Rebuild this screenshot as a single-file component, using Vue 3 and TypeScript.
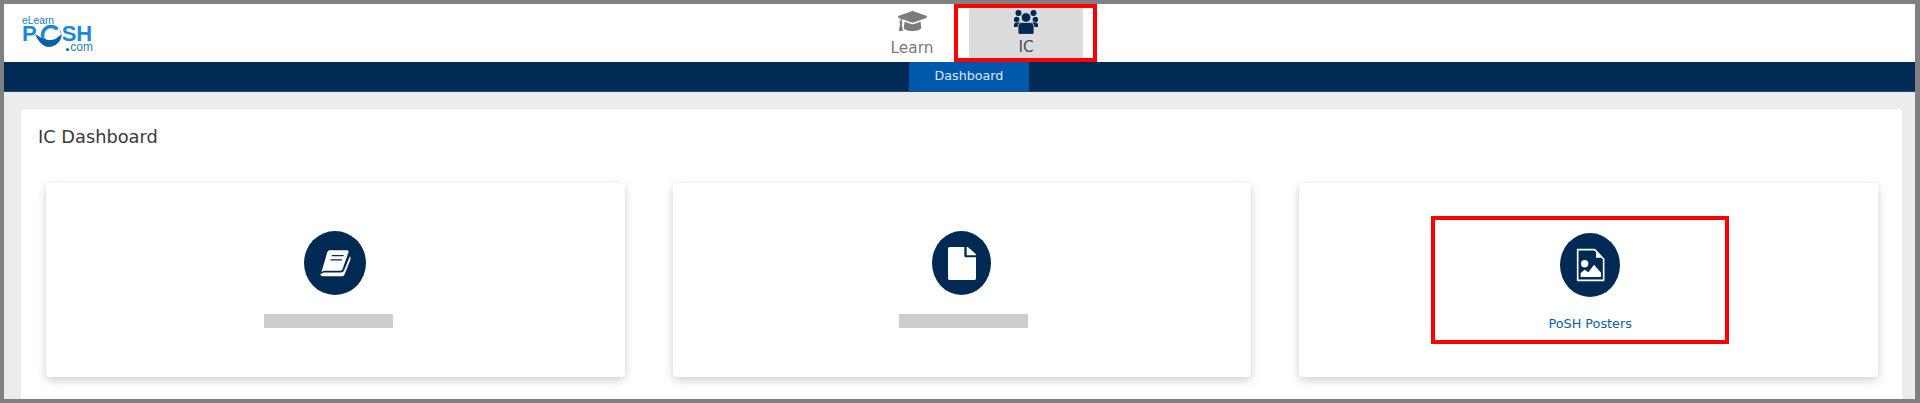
<script setup lang="ts">
interface Card {
  name: string
  label?: string
  circle: string
}

const cards: Card[] = [
  { name: 'book', circle: 'wide' },
  { name: 'file', circle: 'narrow' },
  { name: 'poster', label: 'PoSH Posters', circle: 'mid' }
]
</script>

<template>
  <div class="frame">
    <header class="top">
      <div class="logo">
        <span class="logo-small">eLearn</span>
        <div class="logo-word">
          <span>P</span>
          <svg class="logo-o" viewBox="0 0 30 22" aria-hidden="true">
            <circle cx="16" cy="10" r="8.5" fill="none" stroke="#1b8ad6" stroke-width="3.6" />
            <path d="M8 12C13 12 19 8 24 3L26 10C22 13 15 15 8 12Z" fill="#fff" />
            <path d="M0 9C5 12 9 15 14 15C19 15 24 13 27 9C26 17 20 22 14 22C8 22 3 16 0 9Z" fill="#0f5ea8" />
          </svg>
          <span>SH</span>
        </div>
        <span class="logo-com"><i></i>com</span>
      </div>
      <nav class="tabs">
        <div class="tab">
          <svg class="cap" viewBox="0 64 640 384" preserveAspectRatio="none" aria-hidden="true">
            <path fill="#7b7b7b" d="M622.34 153.2L343.4 67.5c-15.2-4.67-31.6-4.67-46.79 0L17.66 153.2c-23.54 7.23-23.54 38.36 0 45.59l48.63 14.94c-10.67 13.19-17.23 29.28-17.88 46.9C38.78 266.15 32 276.11 32 288c0 10.78 5.68 19.85 13.86 25.65L20.33 428.53C18.11 438.52 25.71 448 35.94 448h56.11c10.24 0 17.84-9.48 15.62-19.47L82.14 313.65C90.32 307.85 96 298.78 96 288c0-11.57-6.47-21.25-15.66-26.87.76-15.02 8.44-28.3 20.69-36.72L296.6 284.5c9.06 2.78 26.44 6.25 46.79 0l278.95-85.7c23.55-7.24 23.55-38.36 0-45.6zM352.79 315.09c-28.53 8.76-52.84 3.92-65.59 0l-145.02-44.55L128 384c0 35.35 85.96 64 192 64s192-28.65 192-64l-14.18-113.47-145.03 44.56z" />
          </svg>
          <span class="tab-label">Learn</span>
        </div>
        <div class="tab active">
          <svg class="users" viewBox="10 6 24 24" aria-hidden="true">
            <g fill="#002a54">
              <circle cx="14.5" cy="9" r="3" />
              <circle cx="29.5" cy="9" r="3" />
              <circle cx="12.6" cy="15.5" r="2.8" />
              <circle cx="31.4" cy="15.5" r="2.8" />
              <path d="M10 21C10 19 11.5 18.5 13 18.5H31C32.5 18.5 34 19 34 21V23H10Z" />
            </g>
            <g fill="#002a54" stroke="#dcdcdc" stroke-width="0.8">
              <circle cx="22" cy="13.5" r="4.8" />
              <path d="M14 29V23C14 20 16 18.5 18 18.5H26C28 18.5 30 20 30 23V29C30 30 29 30.4 28 30.4H16C15 30.4 14 30 14 29Z" />
            </g>
          </svg>
          <span class="tab-label">IC</span>
        </div>
      </nav>
    </header>

    <div class="subnav">
      <span class="subnav-item">Dashboard</span>
    </div>

    <main class="content">
      <section class="panel">
        <h1 class="panel-title">IC Dashboard</h1>
        <div class="cards">
          <article v-for="card in cards" :key="card.name" class="card">
            <div class="circle" :class="card.circle">
              <svg v-if="card.name === 'book'" class="ic-book" viewBox="238 112 98 88" aria-hidden="true">
                <path fill="#fff" d="M268 116H322Q328 116 326 123L308 174Q306 178 301 178H256Q250 178 246 181L244 183L262 122Q264 116 268 116Z" />
                <path fill="#fff" d="M246 186Q247 183 254 183H304Q310 183 313 177L331 133Q334 140 332 145L314 190Q312 195 306 195H250Q243 195 241 190Q240 187 246 186Z" />
                <path fill="#002a54" d="M276 130H312L311 134H275ZM272 143H307L306 147H271Z" />
              </svg>
              <svg v-else-if="card.name === 'file'" class="ic-file" viewBox="0 0 384 512" preserveAspectRatio="none" aria-hidden="true">
                <path fill="#fff" d="M224 136V0H24C10.7 0 0 10.7 0 24v464c0 13.3 10.7 24 24 24h336c13.3 0 24-10.7 24-24V160H248c-13.2 0-24-10.8-24-24zm160-14.1v6.1H256V0h6.1c6.4 0 12.5 2.5 17 7l97.9 98c4.5 4.5 7 10.6 7 16.9z" />
              </svg>
              <svg v-else class="ic-poster" viewBox="466 113 87 102" aria-hidden="true">
                <path fill="none" stroke="#fff" stroke-width="5" stroke-linejoin="round" d="M471 118H522L549 146V210H471Z" />
                <path fill="#fff" d="M526 124L543 142H526Z" />
                <circle cx="492" cy="160" r="11" fill="#fff" />
                <path fill="#fff" d="M480 200V188L492 178L503 186L520 163L541 187V200Z" />
              </svg>
            </div>
            <span v-if="card.label" class="card-label">{{ card.label }}</span>
            <span v-else class="redacted"></span>
          </article>
        </div>
      </section>
    </main>

    <div class="mark mark-tab"></div>
    <div class="mark mark-card"></div>
  </div>
</template>

<style>
html,
body {
  margin: 0;
  background: #808080;
}
</style>

<style scoped>
.frame {
  position: relative;
  box-sizing: border-box;
  width: 1920px;
  height: 403px;
  display: flex;
  flex-direction: column;
  padding: 4px 5px 4px 4px;
  background: #808080;
  overflow: hidden;
  font-family: "DejaVu Sans", Verdana, sans-serif;
}

.top {
  position: relative;
  flex: 0 0 58px;
  display: flex;
  justify-content: center;
  background: #fff;
}

.logo {
  position: absolute;
  left: 18px;
  top: 12px;
  width: 71px;
  display: flex;
  flex-direction: column;
  color: #1b8ad6;
  font-family: "Liberation Sans", Arial, sans-serif;
}

.logo-small {
  font-size: 10.3px;
  line-height: 9px;
  color: #2a7cc4;
}

.logo-word {
  display: flex;
  align-items: flex-start;
  font-size: 22px;
  font-weight: 700;
  line-height: 18px;
}

.logo-o {
  width: 30px;
  height: 22px;
  margin: 0 -3px -4px -2px;
}

.logo-com {
  align-self: flex-end;
  display: flex;
  align-items: flex-end;
  gap: 1px;
  font-size: 12px;
  line-height: 9px;
  color: #2a7cc4;
}

.logo-com i {
  width: 3px;
  height: 3px;
  margin-bottom: 1px;
  border-radius: 50%;
  background: #0f5ea8;
}

.tabs {
  display: flex;
  margin-left: 19px;
}

.tab {
  box-sizing: border-box;
  width: 114px;
  display: flex;
  flex-direction: column;
  align-items: center;
  padding-top: 7px;
}

.tab.active {
  background: #dcdcdc;
  padding-top: 6px;
}

.cap {
  width: 29px;
  height: 20px;
}

.users {
  width: 24px;
  height: 24px;
}

.tab-label {
  margin-top: 8px;
  font-size: 15.3px;
  line-height: 18px;
  color: #7b7b7b;
}

.active .tab-label {
  margin-top: 4px;
  color: #3d4f63;
}

.subnav {
  flex: 0 0 30px;
  display: flex;
  justify-content: center;
  background: #002a54;
  border-bottom: 1px solid #1d4a78;
  box-sizing: border-box;
}

.subnav-item {
  width: 120px;
  margin-left: 19px;
  text-align: center;
  font-size: 12.7px;
  line-height: 28px;
  color: #dfe9f5;
  background: #0058ad;
}

.content {
  flex: 1;
  min-height: 0;
  padding: 17px 13px 0 17px;
  background: #ececec;
}

.panel {
  box-sizing: border-box;
  height: 100%;
  padding: 17px 24px 0 25px;
  background: #fff;
  border-radius: 4px 4px 0 0;
}

.panel-title {
  margin: 0 0 0 -8px;
  font-size: 17.8px;
  font-weight: 400;
  line-height: 22px;
  color: #3a3a3a;
}

.cards {
  display: grid;
  grid-template-columns: repeat(3, 1fr);
  gap: 48px;
  margin-top: 35px;
}

.card {
  height: 194px;
  box-sizing: border-box;
  display: flex;
  flex-direction: column;
  align-items: center;
  padding-top: 50px;
  background: #fff;
  border-radius: 4px;
  box-shadow: 0 3px 10px rgba(0, 0, 0, 0.2);
}

.circle {
  height: 64px;
  display: flex;
  align-items: center;
  justify-content: center;
  border-radius: 50%;
  background: #002a54;
}

.circle.wide {
  width: 62px;
  margin-top: -2px;
}

.circle.narrow {
  width: 59px;
  margin-top: -2px;
}

.circle.mid {
  width: 60px;
  margin-left: 3px;
}

.ic-book {
  width: 33px;
  height: 29px;
}

.ic-file {
  width: 28px;
  height: 33px;
}

.ic-poster {
  width: 29px;
  height: 34px;
}

.redacted {
  width: 129px;
  height: 14px;
  margin-top: 19px;
  background: #cdcdcd;
}

.wide + .redacted {
  margin-left: -13px;
}

.narrow + .redacted {
  margin-left: 3px;
}

.card-label {
  margin-top: 19px;
  margin-left: 3px;
  font-size: 12.8px;
  line-height: 16px;
  color: #0b5cad;
}

.mark {
  position: absolute;
  box-sizing: border-box;
  border: 4px solid #ff0000;
}

.mark-tab {
  left: 954px;
  top: 4px;
  width: 143px;
  height: 58px;
}

.mark-card {
  left: 1431px;
  top: 216px;
  width: 298px;
  height: 128px;
}
</style>
